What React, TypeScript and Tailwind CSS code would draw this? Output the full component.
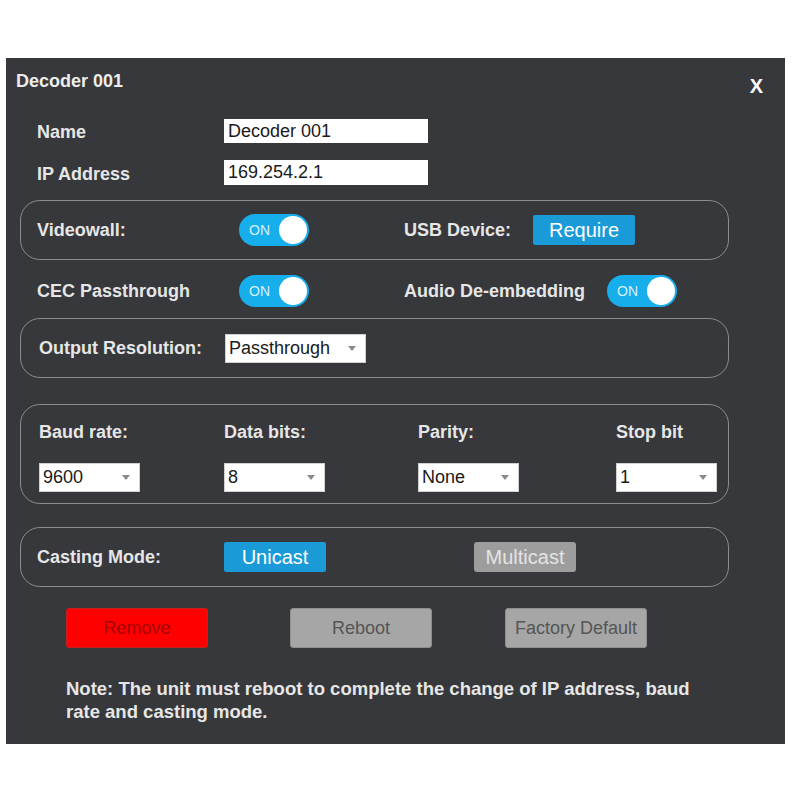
import type { ReactNode } from 'react'

function Toggle() {
  return (
    <div className="relative flex h-[32px] w-[70px] items-center rounded-full bg-[#17aeec]">
      <span className="pl-[10px] text-[14px] leading-none text-[#d6f1ff]">ON</span>
      <span className="absolute right-[2px] top-[2px] h-[28px] w-[28px] rounded-full bg-white" />
    </div>
  )
}

function Select({ value, width }: { value: string; width: string }) {
  return (
    <div
      className={`flex h-[29px] items-center justify-between border border-[#d0d0d0] bg-white pl-[3px] pr-[9px] text-[18px] text-[#1a1a1a] ${width}`}
    >
      <span>{value}</span>
      <span className="h-0 w-0 border-x-[4px] border-t-[5px] border-x-transparent border-t-[#8a8a8a]" />
    </div>
  )
}

function Group({ children, className }: { children: ReactNode; className?: string }) {
  return (
    <div className={`w-[709px] rounded-[20px] border-[1.5px] border-[#8b8c8e] ${className ?? ''}`}>
      {children}
    </div>
  )
}

const label = 'text-[18px] font-bold text-[#e6e6e6]'

export default function App() {
  return (
    <div className="min-h-[800px] bg-white pl-[6px] pt-[58px] font-['Liberation_Sans',Arial,sans-serif]">
      <div className="h-[686px] w-[779px] bg-[#37383b] pl-[10px] pt-[12px]">
        <div className="flex h-[20px] items-start justify-between pr-[22px]">
          <span className="mt-[1px] text-[18px] font-bold leading-[20px] text-[#ececec]">Decoder 001</span>
          <span className="mt-[6px] text-[20px] font-bold leading-[20px] text-white">X</span>
        </div>

        <div className="ml-[21px] mt-[29px] flex h-[24px] items-center">
          <span className={`${label} mt-[3px] w-[187px]`}>Name</span>
          <div className="flex h-[24px] w-[204px] items-center bg-white pl-[4px] text-[18px] text-[#1a1a1a]">
            Decoder 001
          </div>
        </div>
        <div className="ml-[21px] mt-[17px] flex h-[25px] items-center">
          <span className={`${label} mt-[3px] w-[187px]`}>IP Address</span>
          <div className="flex h-[25px] w-[204px] items-center bg-white pl-[4px] text-[18px] text-[#1a1a1a]">
            169.254.2.1
          </div>
        </div>

        <div className="ml-[4px] mt-[15px]">
          <Group className="flex h-[60px] items-center pl-[16px]">
            <span className={`${label} w-[202px]`}>Videowall:</span>
            <Toggle />
            <span className={`${label} ml-[95px] w-[129px]`}>USB Device:</span>
            <div className="flex h-[30px] w-[102px] items-center justify-center rounded-[2px] bg-[#1a9bd8] text-[20px] text-white">
              Require
            </div>
          </Group>
        </div>

        <div className="ml-[21px] mt-[15px] flex h-[32px] items-center">
          <span className={`${label} w-[202px]`}>CEC Passthrough</span>
          <Toggle />
          <span className={`${label} ml-[95px] w-[203px]`}>Audio De-embedding</span>
          <Toggle />
        </div>

        <div className="ml-[4px] mt-[11px]">
          <Group className="flex h-[60px] items-center pl-[18px]">
            <span className={`${label} w-[186px]`}>Output Resolution:</span>
            <Select value="Passthrough" width="w-[141px]" />
          </Group>
        </div>

        <div className="ml-[4px] mt-[26px]">
          <Group className="h-[100px] pl-[18px] pt-[16px]">
            <div className="flex h-[22px] items-center">
              <span className={`${label} w-[185px]`}>Baud rate:</span>
              <span className={`${label} w-[194px]`}>Data bits:</span>
              <span className={`${label} w-[198px]`}>Parity:</span>
              <span className={label}>Stop bit</span>
            </div>
            <div className="mt-[20px] flex">
              <Select value="9600" width="w-[101px]" />
              <div className="w-[84px]" />
              <Select value="8" width="w-[101px]" />
              <div className="w-[93px]" />
              <Select value="None" width="w-[101px]" />
              <div className="w-[97px]" />
              <Select value="1" width="w-[101px]" />
            </div>
          </Group>
        </div>

        <div className="ml-[4px] mt-[23px]">
          <Group className="flex h-[60px] items-center pl-[16px]">
            <span className={`${label} w-[187px]`}>Casting Mode:</span>
            <div className="flex h-[30px] w-[102px] items-center justify-center rounded-[2px] bg-[#1a9bd8] text-[20px] text-white">
              Unicast
            </div>
            <div className="ml-[148px] flex h-[30px] w-[102px] items-center justify-center rounded-[3px] bg-[#9d9d9e] text-[20px] text-[#e4e4e4]">
              Multicast
            </div>
          </Group>
        </div>

        <div className="ml-[50px] mt-[21px] flex h-[40px] gap-[82px]">
          <div className="flex w-[142px] items-center justify-center rounded-[3px] border border-[#c42020] bg-[#ff0000] text-[18px] text-[#a80000]">
            Remove
          </div>
          <div className="flex w-[142px] items-center justify-center rounded-[3px] border border-[#8e8e8e] bg-[#a6a6a6] text-[18px] text-[#555555]">
            Reboot
          </div>
          <div className="ml-[-9px] flex w-[142px] items-center justify-center rounded-[3px] border border-[#8e8e8e] bg-[#a6a6a6] text-[18px] text-[#555555]">
            Factory Default
          </div>
        </div>

        <p className="ml-[50px] mt-[29px] w-[640px] text-[18.5px] font-bold leading-[23px] text-[#e6e6e6]">
          Note: The unit must reboot to complete the change of IP address, baud rate and casting mode.
        </p>
      </div>
    </div>
  )
}
